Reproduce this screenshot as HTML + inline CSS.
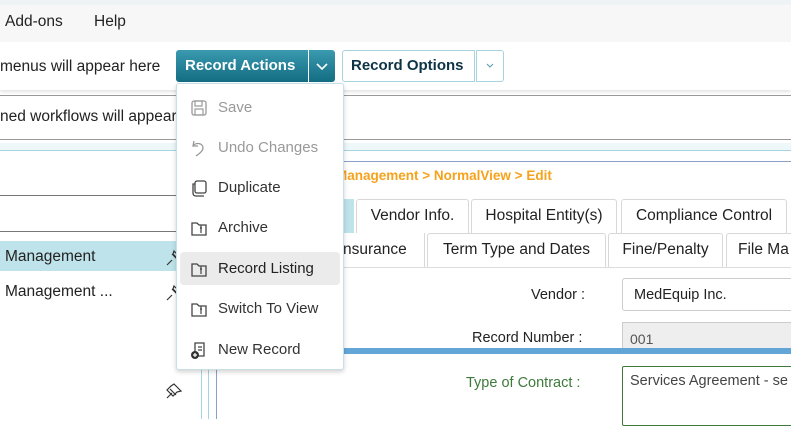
<!DOCTYPE html>
<html><head><meta charset="utf-8"><style>
*{margin:0;padding:0;box-sizing:border-box}
body{width:791px;height:419px;overflow:hidden;background:#fff;font-family:"Liberation Sans",sans-serif;position:relative;color:#222}
.a{position:absolute}
.t{position:absolute;white-space:nowrap}
.tab{position:absolute;border:1px solid #d8d8d8;border-bottom:none;border-radius:3px 3px 0 0;background:#fff;font-size:15.5px;color:#222;text-align:center;line-height:32px;white-space:nowrap;overflow:hidden}
.mi{position:absolute;left:4px;width:160px;height:33px;font-size:15px;line-height:33px;padding-left:38px}
.mi svg{position:absolute;left:10px;top:8px}
</style></head><body>
<div class="a" style="left:0;top:0;width:791px;height:5px;background:#eef3f6"></div>
<div class="a" style="left:0;top:5px;width:791px;height:37px;background:#f7f7f7"></div>
<div class="t" style="left:5px;top:13px;font-size:15.5px">Add-ons</div>
<div class="t" style="left:94px;top:13px;font-size:15.5px">Help</div>
<div class="a" style="left:0;top:42px;width:791px;height:48px;background:#fff;box-shadow:0 2px 3px #e4e4e4"></div>
<div class="t" style="left:0;top:58px;font-size:15.5px">menus will appear here</div>
<div class="a" style="left:176px;top:50px;width:132px;height:32px;border-radius:3px 0 0 3px;background:linear-gradient(#3a9ab0,#136c82)"></div>
<div class="t" style="left:185px;top:57px;font-size:15px;font-weight:bold;color:#fff">Record Actions</div>
<div class="a" style="left:309px;top:50px;width:26px;height:32px;border-radius:0 3px 3px 0;background:linear-gradient(#3a9ab0,#136c82)"></div>
<svg class="a" style="left:315px;top:60px" width="14" height="12"><path d="M2 4l5 5 5-5" fill="none" stroke="#fff" stroke-width="1.6"/></svg>
<div class="a" style="left:342px;top:50px;width:133px;height:32px;border:1px solid #a8d4e0;border-radius:3px 0 0 3px;background:#fff"></div>
<div class="t" style="left:351px;top:57px;font-size:15px;font-weight:bold;color:#0d3446">Record Options</div>
<div class="a" style="left:476px;top:50px;width:28px;height:32px;border:1px solid #a8d4e0;border-radius:0 3px 3px 0;background:#fff"></div>
<svg class="a" style="left:485px;top:62px" width="10" height="8"><path d="M2 2l3 3 3-3" fill="none" stroke="#5a9ab0" stroke-width="1"/></svg>
<div class="a" style="left:0;top:95px;width:791px;height:1px;background:#999"></div>
<div class="t" style="left:0;top:108px;font-size:15.5px">ned workflows will appear</div>
<div class="a" style="left:0;top:139px;width:791px;height:1px;background:#999"></div>
<div class="a" style="left:0;top:143px;width:791px;height:8px;background:#eef7fa;border-bottom:1px solid #a5d5e0"></div>
<div class="a" style="left:0;top:195px;width:200px;height:1px;background:#777"></div>
<div class="a" style="left:0;top:231px;width:200px;height:1px;background:#777"></div>
<div class="a" style="left:0;top:241px;width:200px;height:30px;background:#bfe3ea"></div>
<div class="t" style="left:5px;top:248px;font-size:15.5px">Management</div>
<div class="t" style="left:5px;top:283px;font-size:15.5px">Management ...</div>
<svg class="a" style="left:164px;top:248px" width="20" height="20"><path d="M3 17l5-5M8 6l6 6M10 3l7 7-3 1-5-5z" fill="none" stroke="#333" stroke-width="1.2"/></svg>
<svg class="a" style="left:164px;top:283px" width="20" height="20"><path d="M3 17l5-5M8 6l6 6M10 3l7 7-3 1-5-5z" fill="none" stroke="#333" stroke-width="1.2"/></svg>
<svg class="a" style="left:164px;top:381px" width="20" height="20"><path d="M3 17l5-5M6 8l6 6M10 3l7 7-4 1-4 4-6-6 4-4z" fill="none" stroke="#333" stroke-width="1.2"/></svg>
<div class="a" style="left:201px;top:152px;width:1px;height:267px;background:#a5d5e0"></div>
<div class="a" style="left:208px;top:152px;width:1px;height:267px;background:#a5d5e0"></div>
<div class="a" style="left:216px;top:161px;width:1px;height:258px;background:#8aa0c8"></div>
<div class="a" style="left:216px;top:161px;width:575px;height:1px;background:#8aa0c8"></div>
<div class="t" style="left:336px;top:168px;font-size:13.5px;font-weight:bold;color:#f7a21b">Management &gt; NormalView &gt; Edit</div>
<div class="a" style="left:330px;top:199px;width:24px;height:34px;background:#bfe3ea"></div>
<div class="tab" style="left:356px;top:199px;width:113px;height:34px">Vendor Info.</div>
<div class="tab" style="left:471px;top:199px;width:146px;height:34px">Hospital Entity(s)</div>
<div class="tab" style="left:621px;top:199px;width:166px;height:34px">Compliance Control</div>
<div class="a" style="left:300px;top:233px;width:125px;height:35px;border-right:1px solid #d8d8d8;background:#fff"></div>
<div class="t" style="left:343px;top:241px;font-size:15.5px">nsurance</div>
<div class="tab" style="left:427px;top:233px;width:179px;height:35px">Term Type and Dates</div>
<div class="tab" style="left:608px;top:233px;width:115px;height:35px">Fine/Penalty</div>
<div class="tab" style="left:726px;top:233px;width:100px;height:35px;text-align:left;padding-left:11px">File Ma</div>
<div class="a" style="left:216px;top:267px;width:575px;height:1px;background:#ddd"></div>
<div class="t" style="left:531px;top:287px;font-size:14.5px">Vendor :</div>
<div class="a" style="left:622px;top:278px;width:180px;height:33px;border:1px solid #ccc;border-radius:3px"></div>
<div class="t" style="left:634px;top:287px;font-size:14.5px">MedEquip Inc.</div>
<div class="t" style="left:472px;top:330px;font-size:14.5px">Record Number :</div>
<div class="a" style="left:622px;top:322px;width:180px;height:26px;background:#eee;border:1px solid #ccc;border-bottom:none"></div>
<div class="t" style="left:630px;top:331px;font-size:14px;color:#555">001</div>
<div class="a" style="left:216px;top:348px;width:575px;height:6px;background:#62a6d8"></div>
<div class="t" style="left:466px;top:375px;font-size:14.5px;color:#3e7a3c">Type of Contract :</div>
<div class="a" style="left:622px;top:366px;width:180px;height:60px;border:1px solid #3e7a3c;border-radius:2px"></div>
<div class="t" style="left:630px;top:373px;font-size:14.5px;color:#444">Services Agreement - se</div>

<div class="a" style="left:176px;top:83px;width:168px;height:287px;background:#fff;border:1px solid #c8dfe6;border-radius:3px;box-shadow:0 2px 5px rgba(0,0,0,.18)"></div>
<div class="mi" style="left:180px;top:91px;color:#999">Save<svg width="18" height="18"><rect x="2" y="2" width="14" height="14" rx="2" fill="none" stroke="#999" stroke-width="1.3"/><rect x="5" y="2" width="7" height="5" fill="none" stroke="#999" stroke-width="1.2"/><rect x="5" y="10" width="8" height="6" fill="none" stroke="#999" stroke-width="1.2"/></svg></div>
<div class="mi" style="left:180px;top:131px;color:#999">Undo Changes<svg width="18" height="18"><path d="M4 2l-1 5 5 0M3 7c3-4 10-3 10 2 0 3-4 6-7 8" fill="none" stroke="#999" stroke-width="1.3"/></svg></div>
<div class="mi" style="left:180px;top:171px;color:#333">Duplicate<svg width="18" height="18"><rect x="5" y="2" width="11" height="12" rx="2" fill="none" stroke="#444" stroke-width="1.3"/><path d="M5 5h-2v9c0 2 1 3 3 3h8" fill="none" stroke="#444" stroke-width="1.3"/></svg></div>
<div class="mi" style="left:180px;top:211px;color:#333">Archive<svg width="18" height="18"><path d="M2 4h5l2 2h7v10h-14z" fill="none" stroke="#444" stroke-width="1.3"/><path d="M11 6v8M10 9h2" stroke="#444" stroke-width="1.2"/></svg></div>
<div class="mi" style="left:180px;top:252px;color:#222;background:#ebebeb;border-radius:4px">Record Listing<svg width="18" height="18"><path d="M2 4h5l2 2h7v10h-14z" fill="none" stroke="#444" stroke-width="1.3"/><path d="M11 6v8M10 9h2" stroke="#444" stroke-width="1.2"/></svg></div>
<div class="mi" style="left:180px;top:292px;color:#333">Switch To View<svg width="18" height="18"><path d="M2 4h5l2 2h7v10h-14z" fill="none" stroke="#444" stroke-width="1.3"/><path d="M11 6v8M10 9h2" stroke="#444" stroke-width="1.2"/></svg></div>
<div class="mi" style="left:180px;top:333px;color:#333">New Record<svg width="18" height="18"><path d="M5 12V2h9v13h-6" fill="none" stroke="#444" stroke-width="1.3"/><path d="M8 6h4M8 9h4" stroke="#444" stroke-width="1.2"/><circle cx="5" cy="14" r="4" fill="#333"/><path d="M5 12v4M3 14h4" stroke="#fff" stroke-width="1.2"/></svg></div>
</body></html>
